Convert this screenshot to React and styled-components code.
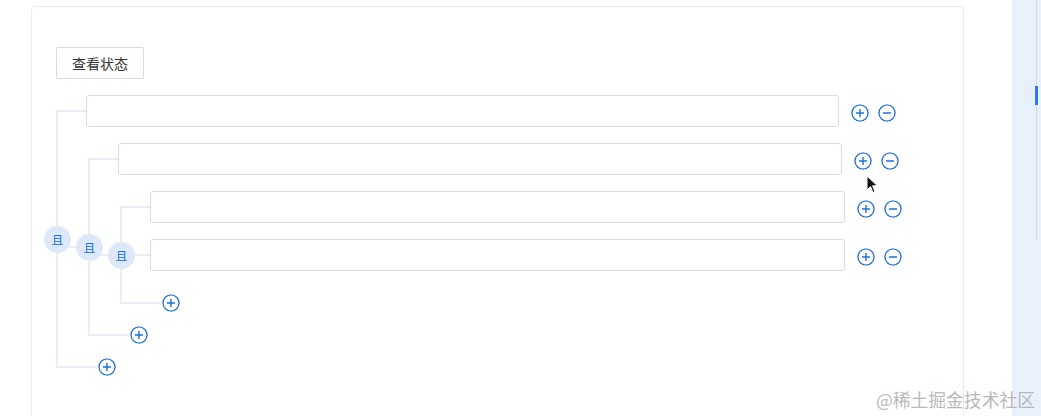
import React from 'react';
import styled, { createGlobalStyle } from 'styled-components';

const GlobalStyle = createGlobalStyle`
  html, body {
    margin: 0;
    padding: 0;
    background: #fff;
    font-family: "Noto Sans CJK SC", "Noto Sans", sans-serif;
    overflow: hidden;
  }
`;

const azul = '#1f6fe0';
const linha = '#e9eef7';

const Pagina = styled.div`
  display: flex;
  height: 416px;
  width: 1041px;
  position: relative;
  overflow: hidden;
`;

const Conteudo = styled.div`
  flex: 1;
  padding: 6px 48px 0 31px;
`;

const Card = styled.div`
  border: 1px solid #ebebeb;
  border-radius: 4px;
  height: 460px;
  padding: 40px 67px 0 24px;
  box-sizing: border-box;
`;

const Botao = styled.button`
  display: block;
  height: 32px;
  padding: 0 15px;
  border: 1px solid #dcdcdc;
  border-radius: 2px;
  background: #fff;
  color: #333;
  font-family: "Noto Sans CJK SC", sans-serif;
  font-size: 14px;
  margin-bottom: 16px;
`;

const Grupo = styled.div`
  position: relative;
  display: flex;
  flex-direction: column;
  padding-left: 30px;
  margin-left: ${p => (p.$aninhado ? '2px' : '0')};
  margin-right: ${p => (p.$aninhado ? '-3px' : '0')};

  &::before {
    content: '';
    position: absolute;
    left: 0;
    top: 16px;
    bottom: 16px;
    width: 2px;
    background: ${linha};
  }

  &::after {
    content: '';
    position: absolute;
    left: -32px;
    top: 50%;
    width: 32px;
    height: 2px;
    margin-top: -1px;
    background: ${p => (p.$aninhado ? linha : 'transparent')};
  }
`;

const No = styled.div`
  position: absolute;
  left: -12px;
  top: 50%;
  width: 27px;
  height: 27px;
  margin-top: -13px;
  border-radius: 50%;
  background: #dde8f8;
  color: ${azul};
  font-size: 12px;
  display: flex;
  align-items: center;
  justify-content: center;
  z-index: 2;
`;

const Linha = styled.div`
  position: relative;
  display: flex;
  align-items: center;
  height: 32px;
  margin-bottom: 16px;

  &::before {
    content: '';
    position: absolute;
    left: -30px;
    top: 15px;
    width: 30px;
    height: 2px;
    background: ${linha};
  }
`;

const LinhaAdicionar = styled(Linha)`
  margin-bottom: 0;
  padding-left: 12px;

  &::before {
    width: 40px;
  }
`;

const Campo = styled.div`
  flex: 1;
  height: 32px;
  box-sizing: border-box;
  border: 1px solid #dcdcdc;
  border-radius: 3px;
  background: #fff;
`;

const Acoes = styled.div`
  display: flex;
  gap: 9px;
  margin-left: 12px;
  margin-top: 3px;
`;

const Icone = styled.svg`
  display: block;
  width: 18px;
  height: 18px;
  position: relative;
  z-index: 1;
  background: #fff;
  border-radius: 50%;
`;

const Mais = () => (
  <Icone viewBox="0 0 18 18" fill="none" stroke={azul} strokeWidth="1.4">
    <circle cx="9" cy="9" r="8.1" />
    <path d="M9 5v8M5 9h8" />
  </Icone>
);

const Menos = () => (
  <Icone viewBox="0 0 18 18" fill="none" stroke={azul} strokeWidth="1.4">
    <circle cx="9" cy="9" r="8.1" />
    <path d="M5 9h8" />
  </Icone>
);

const Lateral = styled.div`
  width: 29px;
  background: #e7f0fb;
  position: relative;

  &::before {
    content: '';
    position: absolute;
    left: 24px;
    top: 0;
    height: 240px;
    width: 1px;
    background: #d3dde9;
  }

  &::after {
    content: '';
    position: absolute;
    left: 23px;
    top: 86px;
    height: 19px;
    width: 3px;
    background: #2f7ae5;
  }
`;

const MarcaDagua = styled.div`
  position: absolute;
  right: 6px;
  bottom: 4px;
  font-size: 17.8px;
  color: #b9b9b9;
  font-family: "Noto Sans CJK SC", sans-serif;
  z-index: 5;
`;

const Cursor = styled.svg`
  position: absolute;
  left: 866px;
  top: 175px;
  width: 13px;
  height: 19px;
  z-index: 6;
`;

const arvore = {
  filhos: [
    { tipo: 'campo' },
    {
      tipo: 'grupo',
      filhos: [
        { tipo: 'campo' },
        {
          tipo: 'grupo',
          filhos: [{ tipo: 'campo' }, { tipo: 'campo' }],
        },
      ],
    },
  ],
};

const Condicoes = ({ grupo, aninhado }) => (
  <Grupo $aninhado={aninhado}>
    <No>且</No>
    {grupo.filhos.map((filho, i) =>
      filho.tipo === 'grupo' ? (
        <Condicoes key={i} grupo={filho} aninhado />
      ) : (
        <Linha key={i}>
          <Campo />
          <Acoes>
            <Mais />
            <Menos />
          </Acoes>
        </Linha>
      )
    )}
    <LinhaAdicionar>
      <Mais />
    </LinhaAdicionar>
  </Grupo>
);

const App = () => (
  <Pagina>
    <GlobalStyle />
    <Conteudo>
      <Card>
        <Botao>查看状态</Botao>
        <Condicoes grupo={arvore} />
      </Card>
    </Conteudo>
    <Lateral />
    <MarcaDagua>@稀土掘金技术社区</MarcaDagua>
    <Cursor viewBox="0 0 13 19">
      <path
        d="M1 1 L1 15 L4.5 11.5 L7 17.5 L9 16.6 L6.6 10.8 L11.5 10.8 Z"
        fill="#111"
        stroke="#fff"
        strokeWidth="1"
      />
    </Cursor>
  </Pagina>
);

export default App;
